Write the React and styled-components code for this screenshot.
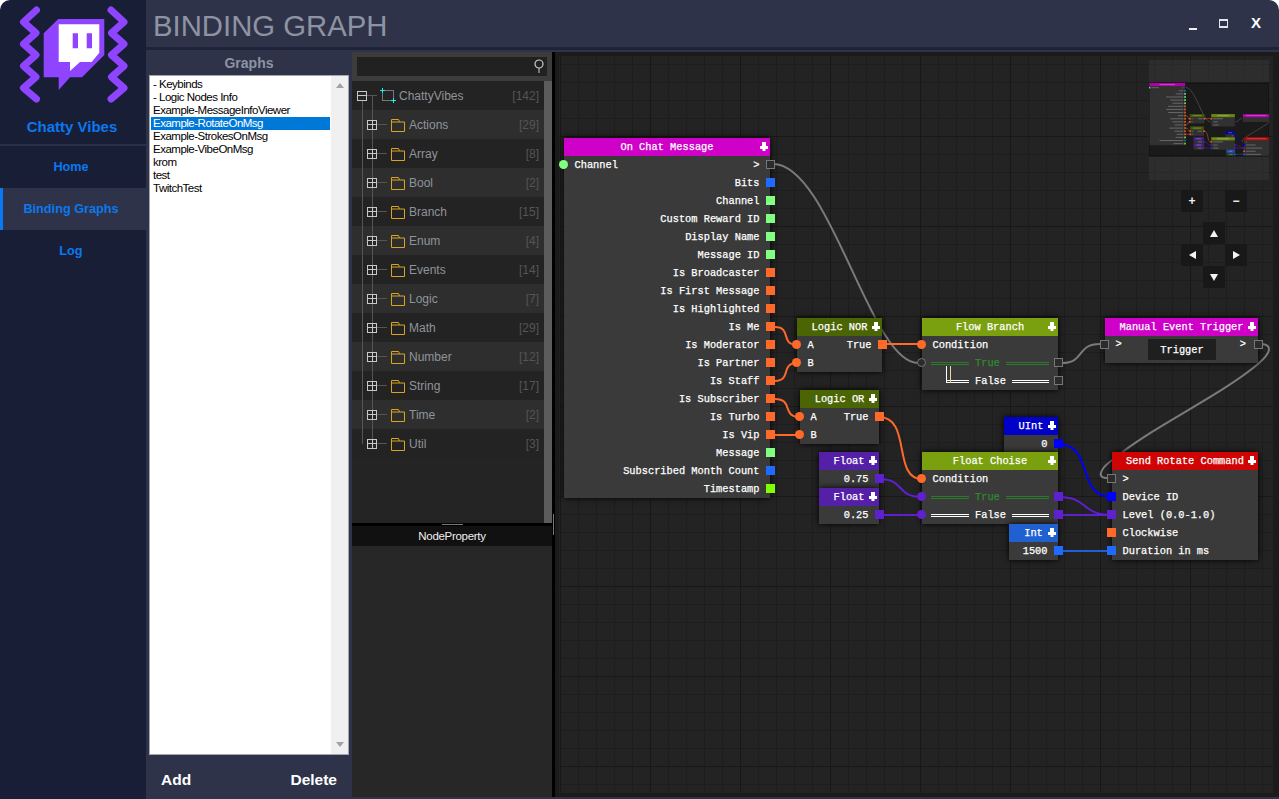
import styled, { createGlobalStyle } from "styled-components";

const ORIGIN_X = 555;
const ORIGIN_Y = 52;
const MINI_SCALE = 0.1727;

const BOOL = "#ff6a2b";
const TEXT = "#80ff80";
const NUM = "#1f6bff";
const TIME = "#80ff00";
const FLOAT = "#5f20cf";
const UINT = "#0000ff";

const GlobalStyle = createGlobalStyle`
  html, body {
    margin: 0;
    height: 100%;
    background: #fff;
    overflow: hidden;
  }
  #root { height: 100%; }
  * { box-sizing: border-box; }
`;

const Window = styled.div`
  width: 1279px;
  height: 799px;
  display: grid;
  grid-template-columns: 146px 1fr;
  border-radius: 10px 10px 0 0;
  overflow: hidden;
  font-family: "Liberation Sans", Arial, sans-serif;
`;

/* left navigation */
const Sidebar = styled.aside`
  background: #181e36;
  display: flex;
  flex-direction: column;
`;

const Logo = styled.svg`
  display: block;
  width: 146px;
  height: 105px;
`;

const Brand = styled.div`
  height: 41px;
  border-bottom: 2px solid #2a2f45;
  display: flex;
  align-items: center;
  justify-content: center;
  color: #0a78f0;
  font-size: 15px;
  font-weight: bold;
  padding: 3px 2px 0 0;
`;

const NavItem = styled.a`
  height: 42px;
  display: flex;
  align-items: center;
  justify-content: center;
  color: #0a78f0;
  font-size: 12.7px;
  font-weight: bold;
  background: ${(p) => (p.$active ? "#2e3349" : "transparent")};
  border-left: 3px solid ${(p) => (p.$active ? "#0a78f0" : "transparent")};
  padding-right: 7px;
`;

/* right part */
const Main = styled.main`
  background: #2e3349;
  display: flex;
  flex-direction: column;
  min-width: 0;
`;

const TitleBar = styled.header`
  height: 50px;
  border-bottom: 3px solid #1f2338;
  display: flex;
  align-items: center;
  justify-content: space-between;
  padding: 0 18px 3px 7px;
`;

const Title = styled.h1`
  margin: 8px 0 0;
  color: #8e93a3;
  font-size: 29.3px;
  font-weight: normal;
  line-height: 1;
`;

const WindowButtons = styled.div`
  display: flex;
  align-items: center;
  gap: 22px;
`;

const MinimizeIcon = styled.span`
  width: 8px;
  height: 2px;
  background: #f0f0f0;
  margin-top: 13px;
`;

const MaximizeIcon = styled.span`
  width: 9px;
  height: 9px;
  border: 2px solid #dfe6f5;
  border-left-width: 1px;
  border-right-width: 1px;
  margin-top: 3px;
`;

const CloseIcon = styled.span`
  color: #fff;
  font-size: 15px;
  font-weight: bold;
  line-height: 1;
  margin-left: 1px;
`;

const Body = styled.div`
  flex: 1;
  display: flex;
  min-height: 0;
`;

const GraphsPanel = styled.section`
  width: 206px;
  padding: 0 3px;
  display: flex;
  flex-direction: column;
`;

const PanelLabel = styled.div`
  height: 25px;
  display: flex;
  align-items: center;
  justify-content: center;
  color: #8e93a3;
  font-size: 14px;
  font-weight: bold;
`;

const ListBox = styled.div`
  height: 680px;
  background: #fff;
  border: 1px solid #a3a6b0;
  display: flex;
`;

const ListItems = styled.ul`
  flex: 1;
  margin: 0;
  padding: 2px 1px;
  list-style: none;
`;

const ListItem = styled.li`
  height: 13px;
  line-height: 13px;
  font-size: 11.5px;
  letter-spacing: -0.5px;
  padding-left: 2px;
  white-space: nowrap;
  color: ${(p) => (p.$selected ? "#fff" : "#000")};
  background: ${(p) => (p.$selected ? "#0078d7" : "transparent")};
`;

const ListScroll = styled.div`
  width: 17px;
  background: #f0f0f0;
  display: flex;
  flex-direction: column;
  justify-content: space-between;
  align-items: center;
  padding: 7px 0;
`;

const ScrollArrow = styled.span`
  width: 0;
  height: 0;
  border-left: 4px solid transparent;
  border-right: 4px solid transparent;
  border-bottom: ${(p) => (p.$down ? "0" : "5px solid #a3a3a3")};
  border-top: ${(p) => (p.$down ? "5px solid #a3a3a3" : "0")};
`;

const ListActions = styled.div`
  flex: 1;
  display: flex;
  align-items: center;
  justify-content: space-between;
  padding: 5px 12px 0 12px;
  color: #fff;
  font-size: 15.5px;
  font-weight: bold;
`;

const Editor = styled.div`
  flex: 1;
  margin: 2px 0;
  display: flex;
  min-width: 0;
`;

const TreeColumn = styled.div`
  width: 200px;
  display: flex;
  flex-direction: column;
  background: #272727;
`;

const SearchBar = styled.div`
  height: 29px;
  background: #3c3c3c;
  padding: 5px;
`;

const SearchField = styled.div`
  height: 19px;
  background: #212121;
  display: flex;
  align-items: center;
  justify-content: flex-end;
  padding-right: 2px;
`;

const TreeArea = styled.div`
  height: 442px;
  background: #242424;
  display: flex;
`;

const TreeList = styled.div`
  flex: 1;
`;

const TreeScroll = styled.div`
  width: 8px;
  background: #5c5c5c;
`;

const TreeRow = styled.div`
  position: relative;
  height: 29px;
  display: flex;
  align-items: center;
  padding-left: ${(p) => (p.$root ? "5px" : "15px")};
  padding-right: 5px;
  background: ${(p) => (p.$odd ? "#2e2e2e" : "#232323")};
  font-size: 12px;

  &::before,
  &::after {
    content: "";
    position: absolute;
    width: 1px;
    background: #555;
    top: ${(p) => (p.$root ? "50%" : "0")};
    bottom: ${(p) => (p.$last ? "50%" : "0")};
  }
  &::before { left: 10px; top: ${(p) => (p.$root ? "19px" : "0")}; }
  &::after { left: 20px; }
`;

const Expander = styled.span`
  position: relative;
  z-index: 1;
  width: 10px;
  height: 10px;
  flex: none;
  border: 1px solid #c8c8c8;
  background:
    linear-gradient(#c8c8c8, #c8c8c8) center / 100% 1px no-repeat,
    ${(p) => (p.$open ? "none" : "linear-gradient(#c8c8c8, #c8c8c8) center / 1px 100% no-repeat")},
    #262626;
`;

const Stub = styled.span`
  width: 10px;
  height: 1px;
  flex: none;
  background: #555;
  margin-right: ${(p) => (p.$root ? "5px" : "4px")};
`;

const NodeLabel = styled.span`
  color: #8f949b;
  margin-left: ${(p) => (p.$root ? "3px" : "4px")};
`;

const NodeCount = styled.span`
  margin-left: auto;
  color: #555;
`;

const Splitter = styled.div`
  height: 3px;
  background: #000;
  display: flex;
  justify-content: center;
  align-items: flex-start;
`;

const SplitGrip = styled.span`
  width: 21px;
  height: 1px;
  background: #777;
  margin-top: 1px;
`;

const PropertyTitle = styled.div`
  height: 20px;
  background: #111;
  color: #f0f0f0;
  font-size: 11.5px;
  letter-spacing: -0.3px;
  display: flex;
  align-items: center;
  justify-content: center;
`;

const VSplitter = styled.div`
  width: 3px;
  background: #000;
  position: relative;

  &::after {
    content: "";
    position: absolute;
    left: 1px;
    top: 462px;
    width: 1px;
    height: 21px;
    background: #777;
  }
`;

/* graph */
const Canvas = styled.div`
  flex: 1;
  position: relative;
  overflow: hidden;
  background-color: #232323;
  background-image:
    linear-gradient(#181818 1px, transparent 1px),
    linear-gradient(90deg, #181818 1px, transparent 1px),
    linear-gradient(#1d1d1d 1px, transparent 1px),
    linear-gradient(90deg, #1d1d1d 1px, transparent 1px);
  background-size: 90px 90px, 90px 90px, 18px 18px, 18px 18px;
  background-position: 0 84px, 5px 0, 0 12px, 5px 0;
  box-shadow:
    inset 4px 0 0 #1b1b1b,
    inset 0 4px 0 #1b1b1b,
    inset 0 -4px 0 #1b1b1b,
    inset -6px 0 0 #1b1b1b;
`;

const Wires = styled.svg`
  position: absolute;
  left: 0;
  top: 0;
  width: 724px;
  height: 745px;
`;

const Node = styled.div`
  position: absolute;
  left: ${(p) => p.$x - ORIGIN_X}px;
  top: ${(p) => p.$y - ORIGIN_Y}px;
  width: ${(p) => p.$w}px;
  background: #3a3a3a;
  box-shadow: 0 0 6px #000;
  font-family: "Liberation Mono", "Courier New", monospace;
  font-size: 10.33px;
  color: #fff;
  -webkit-text-stroke: 0.25px currentColor;
`;

const NodeHeader = styled.div`
  position: relative;
  height: 18px;
  background: ${(p) => p.$color};
  color: #fff;
  display: flex;
  align-items: center;
  justify-content: center;
`;

const PinMark = styled.svg`
  position: absolute;
  right: 2px;
  top: 4px;
  width: 8px;
  height: 9px;
`;

const Row = styled.div`
  position: relative;
  height: 18px;
  display: flex;
  align-items: center;
  justify-content: space-between;
  padding: 0 10.5px;
`;

const TriggerRow = styled(Row)`
  height: 27px;
  align-items: flex-start;
  padding-top: 2px;
  justify-content: flex-start;
`;

const TriggerButton = styled.span`
  position: absolute;
  left: 43px;
  top: 3px;
  width: 68px;
  height: 21px;
  background: #1f1f1f;
  display: flex;
  align-items: center;
  justify-content: center;
`;

const TriggerEnd = styled.span`
  position: absolute;
  right: 12px;
  top: 2px;
`;

const Pin = styled.span`
  position: absolute;
  top: 4px;
  width: 9px;
  height: 9px;
  ${(p) => (p.$side === "left" ? "left: -5px;" : "right: -5px;")}
  background: ${(p) => (p.$exec ? "#2b2b2b" : p.$color)};
  border: ${(p) => (p.$exec ? "1px solid #777" : "none")};
  border-radius: ${(p) => (p.$round ? "50%" : "0")};
`;

const BranchRow = styled(Row)`
  justify-content: flex-start;
  padding: 0 9px;
  gap: 6px;
  color: ${(p) => (p.$active ? "#2f8a2f" : "#fff")};
`;

const DoubleLine = styled.span`
  position: relative;
  flex: ${(p) => (p.$grow ? "1" : "none")};
  width: ${(p) => (p.$grow ? "auto" : p.$elbow ? "23px" : "38px")};
  margin-left: ${(p) => (p.$elbow ? "15px" : "0")};
  height: 3px;
  border-top: 1px solid ${(p) => (p.$active ? "#2a7a2a" : "#fff")};
  border-bottom: 1px solid ${(p) => (p.$active ? "#2a7a2a" : "#fff")};

  ${(p) =>
    p.$elbow &&
    `&::before {
      content: "";
      position: absolute;
      left: 0;
      bottom: -1px;
      width: 3px;
      height: 17px;
      border-left: 1px solid #fff;
      border-right: 1px solid #e8d9a0;
    }`}
`;

const MiniMap = styled.svg`
  position: absolute;
  left: 594px;
  top: 8px;
  width: 120px;
  height: 120px;
  filter: blur(0.4px) brightness(0.85);
`;

const NavPad = styled.div`
  position: absolute;
  left: 626px;
  top: 138px;
  display: grid;
  grid-template-columns: repeat(3, 22px);
  grid-template-rows: 22px 10px 22px 22px 22px;
`;

const PadButton = styled.div`
  grid-column: ${(p) => p.$col};
  grid-row: ${(p) => p.$row};
  background: #181818;
  color: #f0f0f0;
  font-family: "Liberation Sans", Arial, sans-serif;
  font-size: 12px;
  font-weight: bold;
  display: flex;
  align-items: center;
  justify-content: center;
`;

const Arrow = styled.span`
  width: 0;
  height: 0;
  ${(p) =>
    p.$dir === "up" || p.$dir === "down"
      ? `border-left: 4px solid transparent; border-right: 4px solid transparent;
         border-${p.$dir === "up" ? "bottom" : "top"}: 7px solid #f4f4f4;`
      : `border-top: 4px solid transparent; border-bottom: 4px solid transparent;
         border-${p.$dir === "left" ? "right" : "left"}: 7px solid #f4f4f4;`}
`;

const graphs = [
  "- Keybinds",
  "- Logic Nodes Info",
  "Example-MessageInfoViewer",
  "Example-RotateOnMsg",
  "Example-StrokesOnMsg",
  "Example-VibeOnMsg",
  "krom",
  "test",
  "TwitchTest",
];

const folders = [
  ["Actions", 29],
  ["Array", 8],
  ["Bool", 2],
  ["Branch", 15],
  ["Enum", 4],
  ["Events", 14],
  ["Logic", 7],
  ["Math", 29],
  ["Number", 12],
  ["String", 17],
  ["Time", 2],
  ["Util", 3],
];

const EXEC = { exec: true };
const EXEC_ROUND = { exec: true, round: true };
const sq = (color) => ({ color });
const dot = (color) => ({ color, round: true });

const nodes = [
  {
    title: "On Chat Message", color: "#cf00c8", x: 564, y: 138, w: 206,
    rows: [
      { l: "Channel", r: ">", lp: dot(TEXT), rp: EXEC },
      { r: "Bits", rp: sq(NUM) },
      { r: "Channel", rp: sq(TEXT) },
      { r: "Custom Reward ID", rp: sq(TEXT) },
      { r: "Display Name", rp: sq(TEXT) },
      { r: "Message ID", rp: sq(TEXT) },
      { r: "Is Broadcaster", rp: sq(BOOL) },
      { r: "Is First Message", rp: sq(BOOL) },
      { r: "Is Highlighted", rp: sq(BOOL) },
      { r: "Is Me", rp: sq(BOOL) },
      { r: "Is Moderator", rp: sq(BOOL) },
      { r: "Is Partner", rp: sq(BOOL) },
      { r: "Is Staff", rp: sq(BOOL) },
      { r: "Is Subscriber", rp: sq(BOOL) },
      { r: "Is Turbo", rp: sq(BOOL) },
      { r: "Is Vip", rp: sq(BOOL) },
      { r: "Message", rp: sq(TEXT) },
      { r: "Subscribed Month Count", rp: sq(NUM) },
      { r: "Timestamp", rp: sq(TIME) },
    ],
  },
  {
    title: "Logic NOR", color: "#4c6504", x: 797, y: 318, w: 85,
    rows: [
      { l: "A", r: "True", lp: dot(BOOL), rp: sq(BOOL) },
      { l: "B", lp: dot(BOOL) },
    ],
  },
  {
    title: "Flow Branch", color: "#7aa00f", x: 922, y: 318, w: 136,
    rows: [
      { l: "Condition", lp: dot(BOOL) },
      { branch: "True", active: true, lp: EXEC_ROUND, rp: EXEC },
      { branch: "False", elbow: true, rp: EXEC },
    ],
  },
  {
    title: "Manual Event Trigger", color: "#cf00c8", x: 1105, y: 318, w: 153,
    rows: [{ trigger: "Trigger", lp: EXEC, rp: EXEC }],
  },
  {
    title: "Logic OR", color: "#4c6504", x: 800, y: 390, w: 79,
    rows: [
      { l: "A", r: "True", lp: dot(BOOL), rp: sq(BOOL) },
      { l: "B", lp: dot(BOOL) },
    ],
  },
  {
    title: "UInt", color: "#0000c8", x: 1004, y: 417, w: 54,
    rows: [{ r: "0", rp: sq(UINT) }],
  },
  {
    title: "Float Choise", color: "#7aa00f", x: 922, y: 452, w: 136,
    rows: [
      { l: "Condition", lp: dot(BOOL) },
      { branch: "True", active: true, lp: dot(FLOAT), rp: sq(FLOAT) },
      { branch: "False", lp: dot(FLOAT), rp: sq(FLOAT) },
    ],
  },
  {
    title: "Float", color: "#5520a8", x: 819, y: 452, w: 60,
    rows: [{ r: "0.75", rp: sq(FLOAT) }],
  },
  {
    title: "Float", color: "#5520a8", x: 819, y: 488, w: 60,
    rows: [{ r: "0.25", rp: sq(FLOAT) }],
  },
  {
    title: "Int", color: "#2060d0", x: 1009, y: 524, w: 49,
    rows: [{ r: "1500", rp: sq(NUM) }],
  },
  {
    title: "Send Rotate Command", color: "#cf0505", x: 1112, y: 452, w: 146,
    rows: [
      { l: ">", lp: EXEC },
      { l: "Device ID", lp: sq(UINT) },
      { l: "Level (0.0-1.0)", lp: sq(FLOAT) },
      { l: "Clockwise", lp: sq(BOOL) },
      { l: "Duration in ms", lp: sq(NUM) },
    ],
  },
];

const wires = [
  { c: "#7a7a7a", d: "M773 164 C830 164 870 363 918 363" },
  { c: "#7a7a7a", d: "M1062 363 C1085 363 1076 344 1100 344" },
  { c: "#7a7a7a", d: "M1262 344 C1272 345 1272 352 1258 364 C1220 396 1150 428 1115 458 C1100 468 1096 478 1107 478" },
  { c: BOOL, d: "M775 327 C792 327 780 345 797 345" },
  { c: BOOL, d: "M775 381 C792 381 780 363 797 363" },
  { c: BOOL, d: "M775 399 C794 399 781 417 800 417" },
  { c: BOOL, d: "M775 435 L800 435" },
  { c: BOOL, d: "M882 344 L922 344" },
  { c: BOOL, d: "M879 417 C912 417 892 479 922 479" },
  { c: FLOAT, d: "M879 479 C906 479 895 497 922 497" },
  { c: FLOAT, d: "M879 515 L922 515" },
  { c: FLOAT, d: "M1058 497 C1090 497 1080 515 1112 515" },
  { c: FLOAT, d: "M1058 515 L1112 515" },
  { c: UINT, d: "M1058 444 C1095 444 1075 497 1112 497" },
  { c: "#1f5fd8", d: "M1058 551 L1112 551" },
];

const nodeHeight = (n) => 18 + n.rows.reduce((h, r) => h + (r.trigger ? 27 : 18), 0);

function RowPins({ row }) {
  return (
    <>
      {row.lp && <Pin $side="left" $exec={row.lp.exec} $round={row.lp.round} $color={row.lp.color} />}
      {row.rp && <Pin $side="right" $exec={row.rp.exec} $round={row.rp.round} $color={row.rp.color} />}
    </>
  );
}

function GraphNode({ node }) {
  return (
    <Node $x={node.x} $y={node.y} $w={node.w}>
      <NodeHeader $color={node.color}>
        {node.title}
        <PinMark viewBox="0 0 8 9">
          <path d="M2 0h4v4h2v3H5.5v2h-3V7H0V4h2z" fill="#fff" />
        </PinMark>
      </NodeHeader>
      {node.rows.map((row, i) => {
        if (row.trigger) {
          return (
            <TriggerRow key={i}>
              &gt;
              <TriggerButton>{row.trigger}</TriggerButton>
              <TriggerEnd>&gt;</TriggerEnd>
              <RowPins row={row} />
            </TriggerRow>
          );
        }
        if (row.branch) {
          return (
            <BranchRow key={i} $active={row.active}>
              <DoubleLine $active={row.active} $elbow={row.elbow} />
              {row.branch}
              <DoubleLine $active={row.active} $grow />
              <RowPins row={row} />
            </BranchRow>
          );
        }
        return (
          <Row key={i}>
            <span>{row.l}</span>
            <span>{row.r}</span>
            <RowPins row={row} />
          </Row>
        );
      })}
    </Node>
  );
}

function MiniNode({ node }) {
  return (
    <g>
      <rect x={node.x} y={node.y} width={node.w} height={nodeHeight(node)} fill="#3a3a3a" />
      <rect x={node.x} y={node.y} width={node.w} height={18} fill={node.color} />
      <rect x={node.x + node.w / 2 - node.title.length * 3} y={node.y + 6} width={node.title.length * 6} height={6} fill="#fff" opacity="0.35" />
      {node.rows.map((row, i) => {
        const y = node.y + 18 + i * 18;
        const left = row.l || row.branch || "";
        const right = row.r || "";
        return (
          <g key={i}>
            <rect x={node.x + 11} y={y + 6} width={left.length * 6.2} height={6} fill="#aaa" opacity="0.55" />
            <rect x={node.x + node.w - 11 - right.length * 6.2} y={y + 6} width={right.length * 6.2} height={6} fill="#aaa" opacity="0.55" />
            {row.lp && !row.lp.exec && <rect x={node.x - 5} y={y + 4} width={10} height={10} fill={row.lp.color} />}
            {row.rp && !row.rp.exec && <rect x={node.x + node.w - 5} y={y + 4} width={10} height={10} fill={row.rp.color} />}
          </g>
        );
      })}
    </g>
  );
}

function TwitchLogo() {
  return (
    <Logo viewBox="0 0 146 105">
      <g fill="none" stroke="#8f45ff" strokeWidth="7" strokeLinecap="round" strokeLinejoin="round">
        <polyline points="36.5,10 23.5,22 36,33 23.5,44 36,55 23.5,66 36,77 23.5,88 36.5,99" />
        <polyline points="111,10 124,22 111.5,33 124,44 111.5,55 124,66 111.5,77 124,88 111,99" />
      </g>
      <path d="M58.3 19H104.3V55L82 77.3H70L58.7 90V77.3H43.7V33.3Z" fill="#8f45ff" />
      <path d="M58.7 24.3H99.3V52.7L91.7 62H80L70 71V62H58.7Z" fill="#fff" />
      <path d="M72.7 33.3H78V48.3H72.7ZM86.7 33.3H92V48.3H86.7Z" fill="#8f45ff" />
    </Logo>
  );
}

function FolderIcon() {
  return (
    <svg width="14" height="14" viewBox="0 0 14 14" style={{ flex: "none" }}>
      <path d="M.5 13.5V1.5H7.5L8.5 4H13.5V13.5ZM.5 4H8.5" fill="none" stroke="#d9a521" />
    </svg>
  );
}

function RootIcon() {
  return (
    <svg width="14" height="14" viewBox="0 0 14 14" style={{ flex: "none", overflow: "visible" }}>
      <rect x="0.5" y="1.5" width="11" height="10" fill="none" stroke="#777" />
      <path d="M.5 -1V4M-2 1.5H3M11.5 9V14M9 11.5H14" stroke="#19f0f0" fill="none" />
    </svg>
  );
}

export default function App() {
  return (
    <>
      <GlobalStyle />
      <Window>
        <Sidebar>
          <TwitchLogo />
          <Brand>Chatty Vibes</Brand>
          <NavItem>Home</NavItem>
          <NavItem $active>Binding Graphs</NavItem>
          <NavItem>Log</NavItem>
        </Sidebar>
        <Main>
          <TitleBar>
            <Title>BINDING GRAPH</Title>
            <WindowButtons>
              <MinimizeIcon />
              <MaximizeIcon />
              <CloseIcon>X</CloseIcon>
            </WindowButtons>
          </TitleBar>
          <Body>
            <GraphsPanel>
              <PanelLabel>Graphs</PanelLabel>
              <ListBox>
                <ListItems>
                  {graphs.map((g) => (
                    <ListItem key={g} $selected={g === "Example-RotateOnMsg"}>{g}</ListItem>
                  ))}
                </ListItems>
                <ListScroll>
                  <ScrollArrow />
                  <ScrollArrow $down />
                </ListScroll>
              </ListBox>
              <ListActions>
                <span>Add</span>
                <span>Delete</span>
              </ListActions>
            </GraphsPanel>
            <Editor>
              <TreeColumn>
                <SearchBar>
                  <SearchField>
                    <svg width="12" height="15" viewBox="0 0 12 15">
                      <circle cx="6" cy="5" r="4" fill="none" stroke="#ccc" strokeWidth="1.2" />
                      <path d="M6 9V14" stroke="#ccc" />
                    </svg>
                  </SearchField>
                </SearchBar>
                <TreeArea>
                  <TreeList>
                    <TreeRow $root>
                      <Expander $open />
                      <Stub $root />
                      <RootIcon />
                      <NodeLabel $root>ChattyVibes</NodeLabel>
                      <NodeCount>[142]</NodeCount>
                    </TreeRow>
                    {folders.map(([name, count], i) => (
                      <TreeRow key={name} $odd={i % 2 === 0} $last={i === folders.length - 1}>
                        <Expander />
                        <Stub />
                        <FolderIcon />
                        <NodeLabel>{name}</NodeLabel>
                        <NodeCount>[{count}]</NodeCount>
                      </TreeRow>
                    ))}
                  </TreeList>
                  <TreeScroll />
                </TreeArea>
                <Splitter>
                  <SplitGrip />
                </Splitter>
                <PropertyTitle>NodeProperty</PropertyTitle>
              </TreeColumn>
              <VSplitter />
              <Canvas>
                <Wires viewBox={`${ORIGIN_X} ${ORIGIN_Y} 724 745`}>
                  {wires.map((w, i) => (
                    <path key={i} d={w.d} fill="none" stroke={w.c} strokeWidth="2" />
                  ))}
                </Wires>
                {nodes.map((n, i) => (
                  <GraphNode key={i} node={n} />
                ))}
                <MiniMap viewBox="0 0 120 120">
                  <rect width="120" height="120" fill="#4a4a4a" opacity="0.35" />
                  <rect x="0" y="23" width="120" height="73" fill="#1f1f1f" stroke="#111" />
                  <g transform={`translate(${0.5 - 564 * MINI_SCALE} ${23 - 138 * MINI_SCALE}) scale(${MINI_SCALE})`}>
                    {wires.map((w, i) => (
                      <path key={i} d={w.d} fill="none" stroke={w.c} strokeWidth="5" opacity="0.6" />
                    ))}
                    {nodes.map((n, i) => (
                      <MiniNode key={i} node={n} />
                    ))}
                  </g>
                </MiniMap>
                <NavPad>
                  <PadButton $col={1} $row={1}>+</PadButton>
                  <PadButton $col={3} $row={1}>−</PadButton>
                  <PadButton $col={2} $row={3}><Arrow $dir="up" /></PadButton>
                  <PadButton $col={1} $row={4}><Arrow $dir="left" /></PadButton>
                  <PadButton $col={3} $row={4}><Arrow $dir="right" /></PadButton>
                  <PadButton $col={2} $row={5}><Arrow $dir="down" /></PadButton>
                </NavPad>
              </Canvas>
            </Editor>
          </Body>
        </Main>
      </Window>
    </>
  );
}
